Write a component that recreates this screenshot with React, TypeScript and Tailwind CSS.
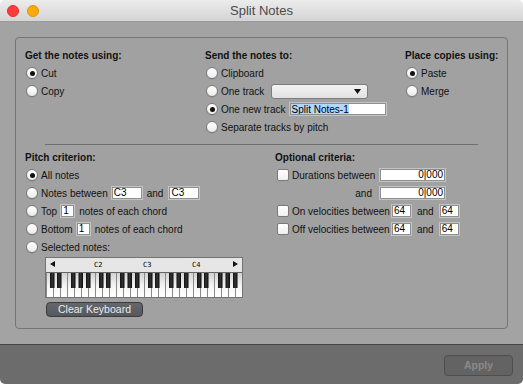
import React from "react";

type RadioProps = { checked?: boolean; label: React.ReactNode };

const Radio = ({ checked = false }: { checked?: boolean }) => (
  <span className="ml-[1px] w-[12px] h-[12px] shrink-0 rounded-full border border-[#7a7a7a] bg-linear-to-b from-white to-[#ececec] flex items-center justify-center shadow-[0_0.5px_0.5px_rgba(0,0,0,0.2)]">
    {checked && <span className="w-[5px] h-[5px] rounded-full bg-[#111]" />}
  </span>
);

const RadioRow = ({ checked, label }: RadioProps) => (
  <div className="h-[18px] flex items-center gap-[3px] whitespace-nowrap">
    <Radio checked={checked} />
    {label}
  </div>
);

const Checkbox = () => (
  <span className="ml-[2px] w-[12px] h-[12px] shrink-0 rounded-[2px] border border-[#7a7a7a] bg-linear-to-b from-white to-[#efefef]" />
);

const Field = ({ value, w, right = false }: { value: string; w: string; right?: boolean }) => (
  <span
    className={`${w} block h-[14px] shrink-0 bg-white border border-[#c4c4c4] outline outline-[#8f8f8f] -outline-offset-2 px-[2px] leading-[12px] text-[10px] text-black ${right ? "text-right" : ""}`}
  >
    {value}
  </span>
);

const Heading = ({ children }: { children: React.ReactNode }) => (
  <div className="h-[18px] flex items-center font-bold whitespace-nowrap">{children}</div>
);

const Keyboard = () => {
  const whites = Array.from({ length: 28 }, (_, i) => i);
  const blackOffsets = [4, 11, 25, 32.5, 40];
  const blacks: number[] = [];
  for (let o = 0; o < 4; o++) blackOffsets.forEach((b) => blacks.push(o * 49 + b));
  return (
    <svg width="198" height="41" viewBox="0 0 198 41" className="block">
      <defs>
        <linearGradient id="wk" x1="0" y1="0" x2="0" y2="1">
          <stop offset="0" stopColor="#cfcfcf" />
          <stop offset="0.55" stopColor="#f4f4f4" />
          <stop offset="1" stopColor="#ffffff" />
        </linearGradient>
        <linearGradient id="bk" x1="0" y1="0" x2="1" y2="0">
          <stop offset="0" stopColor="#111" />
          <stop offset="0.5" stopColor="#333" />
          <stop offset="1" stopColor="#0a0a0a" />
        </linearGradient>
      </defs>
      <rect x="0.5" y="0.5" width="197" height="40" fill="#e6e6e6" stroke="#737373" />
      <path d="M5 7 L10 4 L10 10 Z" fill="#111" />
      <path d="M193 7 L188 4 L188 10 Z" fill="#111" />
      <text x="49" y="10" fontSize="7" fontFamily="DejaVu Sans Mono, monospace" fill="#000">C2</text>
      <text x="98" y="10" fontSize="7" fontFamily="DejaVu Sans Mono, monospace" fill="#000">C3</text>
      <text x="147" y="10" fontSize="7" fontFamily="DejaVu Sans Mono, monospace" fill="#000">C4</text>
      <rect x="1" y="15" width="196" height="25" fill="url(#wk)" />
      <line x1="1" y1="15.5" x2="197" y2="15.5" stroke="#666" />
      {whites.map((i) => (
        <line key={i} x1={1 + i * 7 + 0.5} y1="16" x2={1 + i * 7 + 0.5} y2="40" stroke="#8a8a8a" />
      ))}
      {blacks.map((x, i) => (
        <rect key={i} x={1 + x} y="16" width="4.5" height="15" fill="url(#bk)" />
      ))}
    </svg>
  );
};

export default function App() {
  return (
    <div className="w-[523px] h-[384px] flex flex-col overflow-hidden rounded-[5px] bg-white text-[10px] text-[#111] font-['Liberation_Sans',Arial,sans-serif]">
      {/* title bar */}
      <div className="h-[22px] shrink-0 relative flex items-center justify-center bg-linear-to-b from-[#ececec] to-[#d4d4d4] border-b border-[#9c9c9c]">
        <div className="absolute left-[7px] top-[5px] flex gap-[8px]">
          <span className="w-[12px] h-[12px] rounded-full bg-[#fc3d39] border border-[#e0302c]" />
          <span className="w-[12px] h-[12px] rounded-full bg-[#fda80c] border border-[#df9406]" />
        </div>
        <span className="text-[13px] text-[#4a4a4a]">Split Notes</span>
      </div>

      {/* body */}
      <div className="flex-1 bg-[#a3a3a3] px-[15px] pt-[15px] pb-[15px] flex">
        <div className="flex-1 rounded-[4px] border border-[#757575] bg-[#a1a1a1] pl-[9px] pt-[8px] flex flex-col">
          <div className="grid grid-cols-[180px_200px_1fr]">
            <div>
              <Heading>Get the notes using:</Heading>
              <RadioRow checked label="Cut" />
              <RadioRow label="Copy" />
            </div>
            <div>
              <Heading>Send the notes to:</Heading>
              <RadioRow label="Clipboard" />
              <RadioRow
                label={
                  <>
                    <span>One track</span>
                    <span className="ml-[4px] w-[97px] h-[15px] rounded-[3px] border border-[#7d7d7d] bg-linear-to-b from-[#f2f2f2] to-[#e2e2e2] flex items-center justify-end pr-[6px]">
                      <svg width="7" height="5" viewBox="0 0 7 5">
                        <path d="M0 0 H7 L3.5 5 Z" fill="#111" />
                      </svg>
                    </span>
                  </>
                }
              />
              <RadioRow
                checked
                label={
                  <>
                    <span>One new track</span>
                    <span className="ml-[1px] w-[98px] h-[14px] bg-white border border-[#c4c4c4] outline outline-[#8f8f8f] -outline-offset-2 px-[1px] flex items-center">
                      <span className="bg-[#b3d7ff] leading-[11px] text-black">Split Notes-1</span>
                    </span>
                  </>
                }
              />
              <RadioRow label="Separate tracks by pitch" />
            </div>
            <div>
              <Heading>Place copies using:</Heading>
              <RadioRow checked label="Paste" />
              <RadioRow label="Merge" />
            </div>
          </div>

          <div className="mt-[8px] ml-[20px] w-[433px] h-px bg-[#6e6e6e]" />

          <div className="mt-[3px] grid grid-cols-[250px_1fr]">
            <div>
              <Heading>Pitch criterion:</Heading>
              <RadioRow checked label="All notes" />
              <RadioRow
                label={
                  <>
                    <span>Notes between</span>
                    <Field value="C3" w="w-[32px]" />
                    <span className="ml-[1px]">and</span>
                    <span className="ml-[2px]"><Field value="C3" w="w-[32px]" /></span>
                  </>
                }
              />
              <RadioRow
                label={
                  <>
                    <span>Top</span>
                    <Field value="1" w="w-[15px]" />
                    <span className="ml-[1px]">notes of each chord</span>
                  </>
                }
              />
              <RadioRow
                label={
                  <>
                    <span>Bottom</span>
                    <Field value="1" w="w-[15px]" />
                    <span className="ml-[1px]">notes of each chord</span>
                  </>
                }
              />
              <RadioRow label="Selected notes:" />
              <div className="ml-[20px] mt-px">
                <Keyboard />
              </div>
              <button className="ml-[21px] mt-[4px] w-[97px] h-[15px] rounded-[4px] border border-[#3c3c3c] bg-linear-to-b from-[#64676b] to-[#55585c] text-[10.5px] leading-[13px] text-[#ececec]">
                Clear Keyboard
              </button>
            </div>
            <div>
              <Heading>Optional criteria:</Heading>
              <div className="h-[18px] flex items-center whitespace-nowrap">
                <div className="w-[104px] flex items-center gap-[3px]">
                  <Checkbox />
                  <span>Durations between</span>
                </div>
                <Field value="0|000" w="w-[67px]" right />
              </div>
              <div className="h-[18px] flex items-center">
                <div className="w-[104px] text-right pr-[7px]">and</div>
                <Field value="0|000" w="w-[67px]" right />
              </div>
              <div className="h-[18px] flex items-center gap-[3px] whitespace-nowrap">
                <Checkbox />
                <span className="w-[96px]">On velocities between</span>
                <Field value="64" w="w-[21px]" />
                <span className="mx-[2px]">and</span>
                <Field value="64" w="w-[21px]" />
              </div>
              <div className="h-[18px] flex items-center gap-[3px] whitespace-nowrap">
                <Checkbox />
                <span className="w-[96px]">Off velocities between</span>
                <Field value="64" w="w-[21px]" />
                <span className="mx-[2px]">and</span>
                <Field value="64" w="w-[21px]" />
              </div>
            </div>
          </div>
        </div>
      </div>

      {/* footer */}
      <div className="h-[40px] shrink-0 bg-[#6c6c6c] border-t border-[#454545] flex items-start justify-end pr-[10px] pt-[10px]">
        <button className="w-[69px] h-[21px] rounded-[4px] border border-[#4e4e4e] bg-[#636363] text-[10.5px] font-bold text-[#8a8a8a]">
          Apply
        </button>
      </div>
    </div>
  );
}
